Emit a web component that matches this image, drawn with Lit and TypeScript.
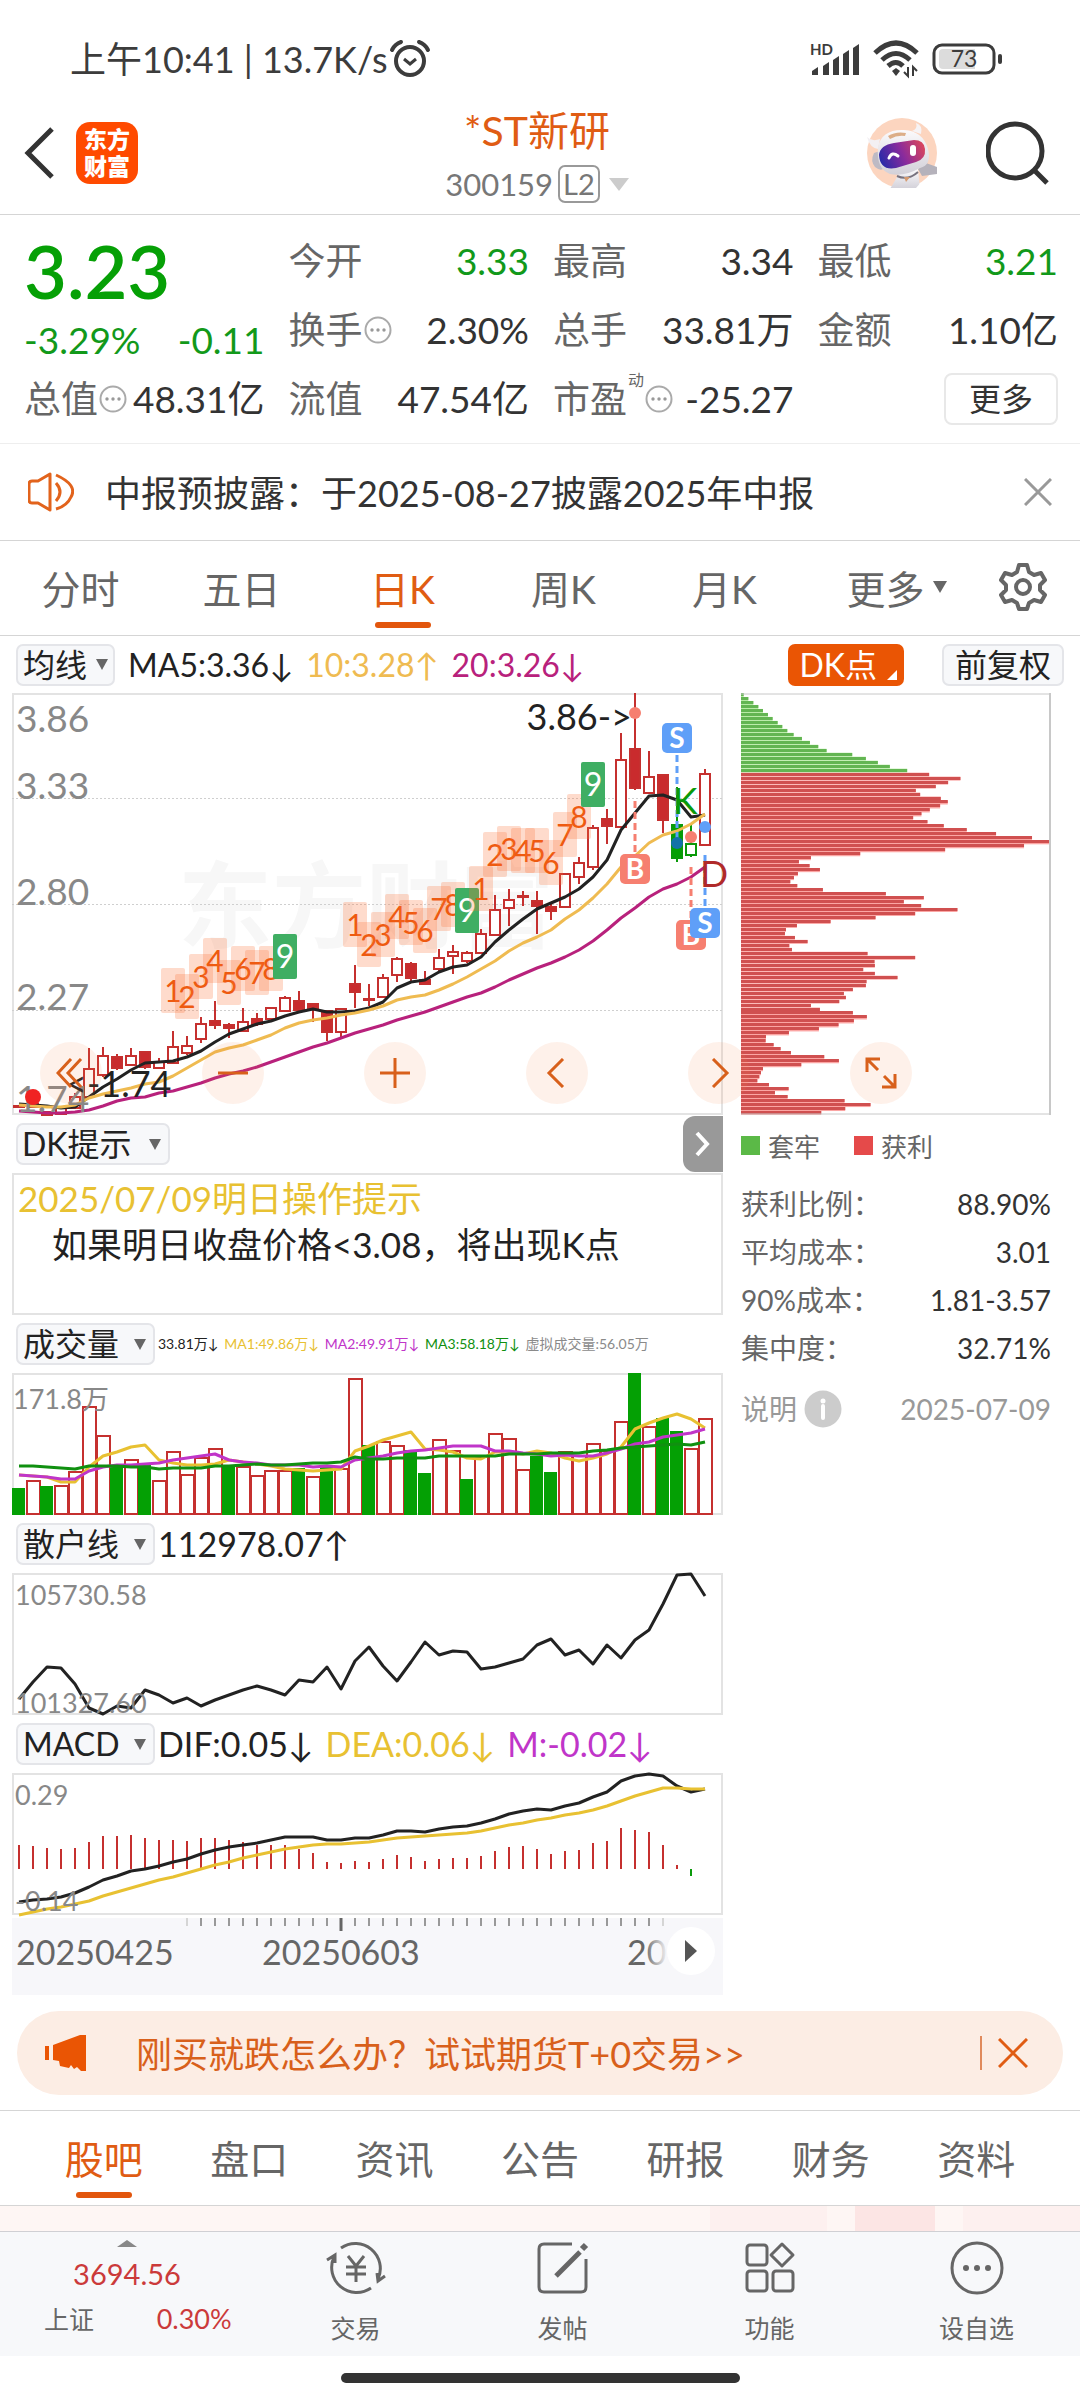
import { LitElement, html, svg, css } from "lit";
import { customElement } from "lit/decorators.js";
import { classMap } from "lit/directives/class-map.js";

type Candle = [number, number, number, number, string];

/* One slot per trading day, shared by all the stacked charts. */
const SLOT = 14;
const dayX = (i: number) => 7 + i * SLOT;
const line = (ys: number[]) => ys.map((y, i) => `${dayX(i)},${y}`).join(" ");

/* high, body top, body bottom, low, kind (h hollow, f filled, g green, k green hollow) */
const CANDLES: Candle[] = [
  [412, 413, 414, 415, "f"], [410, 411, 414, 415, "f"], [419, 419, 422, 422, "f"], [414, 415, 421, 421, "h"], [400, 404, 415, 415, "h"],
  [355, 376, 404, 404, "h"], [354, 363, 382, 384, "h"], [361, 364, 375, 377, "f"], [355, 363, 372, 373, "h"], [358, 359, 374, 376, "f"],
  [365, 369, 375, 375, "h"], [338, 354, 370, 371, "h"], [343, 353, 360, 362, "h"], [324, 331, 346, 350, "h"], [308, 328, 332, 336, "f"],
  [330, 332, 335, 345, "f"], [315, 329, 338, 339, "h"], [320, 326, 331, 333, "f"], [315, 315, 326, 326, "h"], [303, 305, 318, 319, "h"],
  [298, 308, 317, 318, "f"], [310, 311, 315, 329, "f"], [318, 318, 339, 348, "f"], [315, 316, 339, 344, "h"], [272, 291, 299, 315, "f"],
  [291, 306, 307, 313, "f"], [281, 285, 304, 305, "h"], [264, 266, 282, 289, "h"], [269, 271, 285, 290, "f"], [278, 287, 291, 291, "f"],
  [256, 265, 276, 280, "h"], [252, 259, 263, 281, "h"], [258, 260, 268, 270, "h"], [236, 241, 260, 261, "h"], [202, 217, 242, 243, "h"],
  [196, 207, 215, 233, "h"], [198, 203, 204, 213, "f"], [198, 208, 213, 241, "f"], [210, 214, 218, 227, "f"], [181, 181, 214, 214, "h"],
  [164, 170, 184, 191, "h"], [132, 135, 174, 177, "h"], [116, 126, 133, 151, "f"], [40, 67, 134, 135, "h"], [0, 56, 95, 97, "f"],
  [58, 84, 100, 101, "h"], [81, 82, 127, 140, "f"], [94, 132, 165, 169, "g"], [130, 151, 162, 164, "k"], [76, 81, 152, 153, "h"],
];
const MA5 = [411, 412, 413, 415, 414, 404, 394, 386, 377, 370, 369, 368, 364, 358, 349, 341, 336, 331, 328, 323, 319, 316, 319, 319, 318, 315, 309, 295, 289, 287, 279, 274, 272, 264, 249, 237, 226, 216, 210, 204, 196, 184, 167, 137, 120, 103, 102, 107, 124, 122];
const MA10 = [412, 413, 414, 414, 412, 405, 401, 398, 395, 391, 389, 383, 375, 367, 359, 355, 352, 347, 342, 335, 330, 327, 325, 322, 320, 317, 313, 307, 304, 302, 297, 291, 284, 276, 268, 258, 250, 244, 237, 226, 217, 205, 191, 174, 163, 150, 142, 138, 131, 121];
const MA20 = [418, 419, 420, 420, 419, 417, 413, 408, 405, 404, 400, 398, 394, 390, 385, 381, 378, 374, 369, 364, 359, 354, 350, 345, 340, 336, 332, 327, 323, 319, 314, 309, 304, 300, 294, 287, 281, 275, 270, 264, 257, 248, 237, 225, 215, 204, 196, 191, 184, 174];
/* Nine-count runs: first day, then the label top of each day. */
const RUNS: [number, number[]][] = [
  [11, [275, 281, 261, 245, 267, 253, 257, 253, 241]],
  [24, [209, 229, 219, 201, 207, 215, 193, 189, 195]],
  [33, [173, 139, 133, 135, 135, 147, 119, 101, 69]],
];
const VOLUME = [115, 107, 113, 112, 98, 33, 62, 93, 86, 92, 107, 78, 101, 84, 75, 93, 93, 102, 97, 97, 95, 103, 94, 95, 5, 72, 68, 72, 77, 100, 66, 77, 106, 83, 60, 65, 96, 83, 99, 78, 82, 70, 77, 48, 0, 53, 45, 58, 75, 45];
const VOLUME_DOWN = new Set([0, 2, 7, 9, 15, 20, 22, 25, 28, 29, 32, 37, 38, 44, 46, 47]);
const VMA1 = [102, 103, 104, 109, 109, 94, 83, 79, 74, 72, 87, 90, 92, 92, 91, 87, 89, 91, 93, 96, 97, 98, 97, 96, 78, 73, 67, 63, 59, 76, 77, 79, 85, 86, 79, 79, 81, 78, 80, 85, 88, 85, 81, 74, 56, 50, 45, 41, 46, 55];
const VMA2 = [102, 103, 104, 106, 106, 98, 94, 92, 92, 91, 90, 87, 85, 83, 81, 87, 89, 90, 92, 92, 92, 94, 93, 94, 87, 85, 83, 80, 78, 77, 75, 73, 73, 73, 78, 78, 80, 81, 83, 82, 83, 83, 80, 76, 71, 69, 64, 62, 60, 56];
const VMA3 = [93, 93, 94, 95, 96, 93, 93, 93, 94, 94, 96, 95, 95, 95, 93, 93, 92, 91, 92, 92, 91, 90, 90, 89, 84, 86, 86, 85, 85, 85, 83, 83, 83, 83, 83, 81, 81, 81, 80, 80, 80, 78, 77, 75, 74, 73, 72, 71, 72, 69];
const RETAIL = [126, 109, 94, 95, 111, 135, 141, 133, 135, 117, 122, 130, 125, 133, 127, 122, 117, 113, 117, 122, 107, 109, 94, 116, 88, 74, 93, 108, 89, 69, 82, 78, 79, 96, 94, 90, 86, 72, 66, 82, 77, 91, 72, 85, 67, 57, 31, 2, 1, 23];
const DIF = [129, 127, 126, 124, 120, 114, 107, 103, 98, 96, 93, 89, 86, 81, 77, 74, 72, 70, 67, 64, 64, 64, 67, 67, 65, 65, 62, 58, 58, 59, 56, 54, 53, 50, 46, 41, 38, 36, 37, 33, 30, 24, 19, 8, 3, 1, 3, 13, 19, 16];
const DEA = [142, 139, 136, 134, 131, 128, 123, 119, 115, 111, 107, 104, 100, 96, 92, 89, 85, 82, 79, 76, 74, 72, 71, 71, 70, 69, 67, 65, 64, 63, 62, 61, 60, 58, 55, 52, 50, 47, 45, 42, 40, 37, 33, 28, 23, 19, 15, 15, 16, 16];
const MACD = [72, 73, 75, 76, 75, 69, 63, 63, 62, 65, 67, 67, 68, 65, 65, 67, 69, 72, 72, 72, 76, 80, 89, 90, 88, 89, 86, 82, 84, 88, 86, 85, 85, 83, 78, 74, 73, 76, 81, 78, 77, 70, 68, 55, 57, 59, 72, 92, 103];
/* Cost distribution from the highest price down; the first rows are shares at a loss. */
const COST_AXIS = 62;
const COST_MAX = 993;
const LOSS_ROWS = 20;
const COST = [70, 84, 99, 114, 128, 143, 157, 172, 186, 201, 220, 245, 269, 294, 319, 396, 437, 473, 509, 561, 627, 721, 684, 647, 587, 600, 662, 683, 660, 629, 604, 579, 622, 671, 740, 828, 936, 993, 912, 675, 420, 272, 236, 268, 299, 233, 221, 210, 231, 308, 497, 611, 551, 603, 712, 585, 466, 331, 230, 197, 194, 224, 262, 207, 215, 442, 585, 463, 464, 429, 464, 532, 439, 437, 398, 371, 377, 357, 272, 299, 398, 440, 401, 355, 296, 206, 137, 136, 160, 181, 212, 312, 356, 243, 128, 122, 117, 111, 146, 205, 164, 202, 373, 451, 375, 303];

const base = css`
  * { box-sizing: border-box; }
  button, select { font: inherit; color: inherit; background: none; border: 0; padding: 0; margin: 0; }
  button { display: inline-flex; align-items: center; justify-content: center; }
  a { color: inherit; text-decoration: none; }
  svg { display: block; flex: none; }
`;

@customElement("quote-charts")
export class QuoteCharts extends LitElement {
  static styles = [base, css`
    :host { display: block; }
    .legend-row { display: flex; align-items: center; height: 57px; padding: 0 16px; font-size: 32px; line-height: 40px; }
    .ma { display: flex; gap: 13px; margin-left: 13px; margin-right: auto; white-space: nowrap; }
    .black { color: #222; }
    .amber { color: #efbb51; }
    .magenta { color: #b8217c; }
    .gold { color: #e8c132; }
    .violet { color: #c035c9; }
    .green { color: #109010; }
    .grey { color: #8a8a8a; }
    .pick { position: relative; display: inline-flex; align-items: center; flex: none; }
    .pick::after { content: ""; position: absolute; right: 9px; border: 6px solid transparent; border-top: 11px solid #666; border-bottom: 0; pointer-events: none; }
    .pick select, .chip { appearance: none; height: 42px; border: 2px solid #e4e5e9; border-radius: 7px; background: #f7f8fa; color: #222; font-size: 32px; line-height: 38px; padding: 0 33px 0 5px; }
    .pick.tight::after { right: 7px; }
    .pick.tight select { padding-right: 25px; }
    .pick.wide select { padding: 0 36px 0 4px; }
    .chip { padding: 0 11px; }
    .dk { position: relative; height: 42px; padding: 0 27px 0 11px; border-radius: 7px; background: #ea5504; color: #fff; margin-right: 38px; }
    .dk::after { content: ""; position: absolute; right: 7px; bottom: 6px; border-left: 10px solid transparent; border-bottom: 10px solid #fff; }
    .charts { position: relative; display: grid; grid-template-columns: 711fr 310fr; column-gap: 18px; padding: 0 29px 0 12px; align-items: start; }
    .plot { width: 100%; height: auto; overflow: visible; }
    .frame { fill: none; stroke: #e3e3e3; stroke-width: 2; }
    .grid { stroke: #cfcfcf; stroke-dasharray: 2 2; }
    .up { stroke: #c5302f; fill: #c92b2d; stroke-width: 2; }
    .hollow { fill: #fff; }
    .down { stroke: #0a9a0a; fill: #04a004; stroke-width: 2; }
    .down.hollow { fill: #fff; }
    .curve { fill: none; stroke-width: 3; stroke-linejoin: round; }
    .s-black { stroke: #222; }
    .s-amber { stroke: #efbb51; }
    .s-magenta { stroke: #b8217c; }
    .s-gold { stroke: #e8c132; }
    .s-violet { stroke: #c035c9; }
    .s-green { stroke: #109010; }
    .axis { fill: #888; font-size: 37px; }
    .axis.small { font-size: 27px; }
    .tag { fill: #222; font-size: 36px; }
    .watermark { fill: #f7f7f7; font-size: 94px; font-weight: 700; }
    .count { fill: #fa6f32; fill-opacity: 0.25; }
    .count-text { fill: #ee5a10; font-size: 30px; text-anchor: middle; }
    .nine { fill: #3fae63; }
    .nine-text { fill: #fff; font-size: 32px; text-anchor: middle; }
    .sell { fill: #5f9ff8; }
    .buy { fill: #f67f70; }
    .mark-text { fill: #fff; font-size: 28px; font-weight: 700; text-anchor: middle; }
    .sell-line { stroke: #5f9ff8; stroke-width: 3; stroke-dasharray: 7 4; }
    .buy-line { stroke: #f67f70; stroke-width: 3; stroke-dasharray: 7 4; }
    .letter { font-size: 37px; }
    .row { display: flex; align-items: center; height: 58px; padding-left: 4px; font-size: 34px; line-height: 40px; white-space: nowrap; }
    .row .values { display: flex; margin-left: 3px; gap: 12px; }
    .row .values.tiny { font-size: 14px; gap: 6px; line-height: 24px; }
    .next { margin-left: auto; width: 40px; height: 56px; background: #999; border-radius: 12px 0 0 12px; }
    .tip { height: 142px; border: 2px solid #e3e3e3; padding: 0 4px; font-size: 35px; line-height: 46px; color: #222; }
    .tip p { margin: 0; }
    .tip .advice { padding-left: 34px; }
    .dates { position: relative; margin-top: 3px; background: #f7f7fa; height: 77px; color: #666; }
    .dates .axis { fill: #666; font-size: 34px; }
    .play { position: absolute; right: 8px; top: 9px; width: 48px; height: 48px; border-radius: 50%; background: #fff; }
    .keys { display: flex; align-items: center; height: 60px; color: #666; font-size: 26px; gap: 8px; }
    .keys i { width: 19px; height: 19px; background: #5bb947; }
    .keys i.gain { background: #e54a4a; margin-left: 26px; }
    .stats { width: 100%; border-collapse: collapse; font-size: 28px; line-height: 48px; color: #333; margin-top: 5px; }
    .stats th { font-weight: 400; text-align: left; color: #666; padding: 0; }
    .stats td { text-align: right; padding: 0; }
    .explain { display: flex; justify-content: space-between; align-items: center; color: #999; font-size: 28px; line-height: 40px; margin-top: 17px; }
    .explain button { gap: 7px; }
    .tools { position: absolute; top: 349px; left: 40px; right: 168px; display: flex; justify-content: space-between; }
    .tools button { width: 62px; height: 62px; border-radius: 50%; background: rgba(250, 125, 60, 0.11); }
    .tools svg { fill: none; stroke: #d8601b; stroke-width: 3; }
  `];

  private candle([hi, top, bot, lo, kind]: Candle, i: number) {
    const x = dayX(i);
    const tone = kind === "g" || kind === "k" ? "down" : "up";
    const open = kind === "h" || kind === "k";
    return svg`<g class=${tone}><path d="M${x} ${hi}V${lo}"/><rect class=${classMap({ [tone]: true, hollow: open })} x=${x - 5} y=${top} width="10" height=${Math.max(1, bot - top)} /></g>`;
  }

  private count(start: number, tops: number[]) {
    return tops.map((top, n) => {
      const x = dayX(start + n);
      const last = n === 8;
      return svg`<rect class=${last ? "nine" : "count"} x=${x - 12} y=${top} width="24" height="45" rx="2"/><text class=${last ? "nine-text" : "count-text"} x=${x} y=${top + 34}>${n + 1}</text>`;
    });
  }

  private mark(kind: string, day: number, top: number) {
    const x = dayX(day);
    return svg`<rect class=${kind} x=${x - 15} y=${top} width="30" height="30" rx="5"/><text class="mark-text" x=${x} y=${top + 25}>${kind === "buy" ? "B" : "S"}</text>`;
  }

  private priceChart() {
    return html`<svg class="plot" viewBox="0 0 711 422" role="img" aria-label="日K线">
      <rect class="frame" x="1" y="1" width="709" height="420"/>
      <text class="watermark" x="166" y="248">东方财富</text>
      <path class="grid" d="M0 105.500H711M0 211.500H711M0 317.500H711"/>
      ${CANDLES.map((c, i) => this.candle(c, i))}
      <polyline class="curve s-black" points=${line(MA5)} />
      <polyline class="curve s-amber" points=${line(MA10)} />
      <polyline class="curve s-magenta" points=${line(MA20)} />
      ${RUNS.map(([s, t]) => this.count(s, t))}
      <text class="axis" x="4" y="39">3.86</text>
      <text class="axis" x="4" y="106">3.33</text>
      <text class="axis" x="4" y="212">2.80</text>
      <text class="axis" x="4" y="317">2.27</text>
      <text class="axis" x="4" y="419">1.74</text>
      <circle cx="21" cy="404" r="8" fill="#f02323"/>
      <text class="tag" x="54" y="404">&lt;-1.74</text>
      <text class="tag" x="620" y="37" text-anchor="end">3.86-&gt;</text>
      <path class="buy-line" d="M623 108V160M679 174V227"/>
      <path class="sell-line" d="M665 62V150M693 162V215"/>
      <g class="buy"><circle cx="623" cy="20" r="6"/><circle cx="679" cy="144" r="6"/></g>
      <circle cx="665" cy="150" r="6" fill="#1272a8"/><circle cx="693" cy="134" r="6" fill="#5f9ff8"/>
      ${this.mark("buy", 44, 161)}${this.mark("buy", 48, 227)}${this.mark("sell", 47, 30)}${this.mark("sell", 49, 215)}
      <text class="letter" x="661" y="121" fill="#0a9a0a">K</text>
      <text class="letter" x="688" y="194" fill="#b02a2a">D</text>
    </svg>`;
  }

  private volumeChart() {
    return html`<svg class="plot" viewBox="0 0 711 142" role="img" aria-label="成交量">
      <rect class="frame" x="1" y="1" width="709" height="140"/>
      ${VOLUME.map((y, i) => VOLUME_DOWN.has(i)
        ? svg`<rect fill="#04a004" x=${dayX(i) - 7} y=${y} width="13" height=${142 - y} />`
        : svg`<rect class="up hollow" x=${dayX(i) - 6} y=${y + 1} width="13" height=${140 - y} />`)}
      <polyline class="curve s-gold" points=${line(VMA1)} />
      <polyline class="curve s-violet" points=${line(VMA2)} />
      <polyline class="curve s-green" points=${line(VMA3)} />
      <text class="axis small" x="1" y="36">171.8万</text>
    </svg>`;
  }

  private retailChart() {
    return html`<svg class="plot" viewBox="0 0 711 142" role="img" aria-label="散户线">
      <rect class="frame" x="1" y="1" width="709" height="140"/>
      <polyline class="curve s-black" points=${line(RETAIL)} />
      <text class="axis small" x="3" y="32">105730.58</text>
      <text class="axis small" x="3" y="140">101327.60</text>
    </svg>`;
  }

  private macdChart() {
    return html`<svg class="plot" viewBox="0 0 711 142" role="img" aria-label="MACD">
      <rect class="frame" x="1" y="1" width="709" height="140"/>
      ${MACD.map((y, i) => svg`<path class=${y > 96 ? "down" : "up"} d="M${dayX(i)} 96V${y}"/>`)}
      <polyline class="curve s-black" points=${line(DIF)} />
      <polyline class="curve s-gold" points=${line(DEA)} />
      <text class="axis small" x="3" y="32">0.29</text>
      <text class="axis small" x="3" y="138">-0.14</text>
    </svg>`;
  }

  private costChart() {
    return html`<svg class="plot" viewBox="0 0 310 422" role="img" aria-label="筹码分布">
      ${COST.map((v, i) => {
        const w = ((v - COST_AXIS) / (COST_MAX - COST_AXIS)) * 310;
        const y = (i * 422) / COST.length;
        const loss = i < LOSS_ROWS;
        return svg`<rect x="0" y=${y} width=${w} height="4" fill=${loss ? "#b5eaa2" : "#fba5a3"} /><rect x="0" y=${Math.round(y)} width=${w} height="3" fill=${loss ? "#63b552" : "#d05050"} />`;
      })}
      <path d="M0 1H310M0 421H310" stroke="#c8c8c8"/><path d="M309 0V422" stroke="#c8c8c8" stroke-width="2"/>
    </svg>`;
  }

  private pick(name: string, size = "") {
    return html`<span class="pick ${size}"><select aria-label=${name}><option>${name}</option></select></span>`;
  }

  render() {
    return html`
      <div class="legend-row">
        ${this.pick("均线", "tight")}
        <div class="ma"><span class="black">MA5:3.36↓</span><span class="amber">10:3.28↑</span><span class="magenta">20:3.26↓</span></div>
        <button class="dk">DK点</button>
        <button class="chip">前复权</button>
      </div>
      <div class="charts">
        <div>
          ${this.priceChart()}
          <div class="row">${this.pick("DK提示", "wide")}
            <button class="next" aria-label="下一个"><svg width="16" height="28" viewBox="0 0 16 28" fill="none" stroke="#fff" stroke-width="4"><path d="M2 3L12 14L2 25"/></svg></button>
          </div>
          <div class="tip"><p class="gold">2025/07/09明日操作提示</p><p class="advice">如果明日收盘价格&lt;3.08，将出现K点</p></div>
          <div class="row">${this.pick("成交量")}
            <div class="values tiny"><span class="black">33.81万↓</span><span class="gold">MA1:49.86万↓</span><span class="violet">MA2:49.91万↓</span><span class="green">MA3:58.18万↓</span><span class="grey">虚拟成交量:56.05万</span></div>
          </div>
          ${this.volumeChart()}
          <div class="row">${this.pick("散户线")}<div class="values"><span class="black">112978.07↑</span></div></div>
          ${this.retailChart()}
          <div class="row">${this.pick("MACD")}
            <div class="values"><span class="black">DIF:0.05↓</span><span class="gold">DEA:0.06↓</span><span class="violet">M:-0.02↓</span></div>
          </div>
          ${this.macdChart()}
          <div class="dates">
            <svg class="plot" viewBox="0 0 711 77">
              <defs><linearGradient id="fade"><stop offset="0" stop-color="#f7f7fa" stop-opacity="0"/><stop offset="1" stop-color="#f7f7fa"/></linearGradient></defs>
              ${Array.from({ length: 35 }, (_, n) => n + 12).map((i) => svg`<path d="M${dayX(i)} 0V${i === 23 ? 13 : 8}" stroke=${i === 12 || i === 46 ? "#d5d5d5" : i === 23 ? "#666" : "#999"} stroke-width=${i === 23 ? 3 : 2} />`)}
              <text class="axis" x="4" y="47">20250425</text>
              <text class="axis" x="250" y="47">20250603</text>
              <text class="axis" x="615" y="47">20</text>
              <rect x="632" y="14" width="24" height="42" fill="url(#fade)"/>
            </svg>
            <button class="play" aria-label="播放"><svg width="14" height="22" viewBox="0 0 14 22"><path d="M1 0L13 11L1 22Z" fill="#555"/></svg></button>
          </div>
        </div>
        <div>
          ${this.costChart()}
          <div class="keys"><i></i>套牢<i class="gain"></i>获利</div>
          <table class="stats">
            <tr><th>获利比例：</th><td>88.90%</td></tr>
            <tr><th>平均成本：</th><td>3.01</td></tr>
            <tr><th>90%成本：</th><td>1.81-3.57</td></tr>
            <tr><th>集中度：</th><td>32.71%</td></tr>
          </table>
          <div class="explain">
            <button>说明<svg width="38" height="38" viewBox="0 0 38 38"><circle cx="19" cy="19" r="18.500" fill="#ccc"/><circle cx="19" cy="11" r="2.500" fill="#fff"/><path d="M19 16V28" stroke="#fff" stroke-width="4" stroke-linecap="round"/></svg></button>
            <time>2025-07-09</time>
          </div>
        </div>
        <div class="tools">
          <button aria-label="最左"><svg width="30" height="30" viewBox="0 0 30 30"><path d="M15 1L2 15L15 29M25 1L12 15L25 29"/></svg></button>
          <button aria-label="缩小"><svg width="30" height="30" viewBox="0 0 30 30"><path d="M0 15H30"/></svg></button>
          <button aria-label="放大"><svg width="30" height="30" viewBox="0 0 30 30"><path d="M0 15H30M15 0V30"/></svg></button>
          <button aria-label="左移"><svg width="30" height="30" viewBox="0 0 30 30"><path d="M21 1L7 15L21 29"/></svg></button>
          <button aria-label="右移"><svg width="30" height="30" viewBox="0 0 30 30"><path d="M9 1L23 15L9 29"/></svg></button>
          <button aria-label="全屏"><svg width="32" height="32" viewBox="0 0 32 32"><path d="M2 15V2H15M2 2L13 13M30 17V30H17M30 30L19 19"/></svg></button>
        </div>
      </div>`;
  }
}

@customElement("app-root")
export class AppRoot extends LitElement {
  static styles = [base, css`
    :host { display: block; background: #fff; color: #333; font-family: "Lato", "Noto Sans CJK SC", sans-serif; font-size: 36px; }
    .status { display: flex; align-items: center; justify-content: space-between; padding: 36px 76px 0 70px; line-height: 46px; font-size: 36px; color: #3c3c3c; }
    .status div { display: flex; align-items: center; gap: 3px; }
    .status .right { gap: 12px; }
    .status svg { overflow: visible; }
    .battery { font-size: 23px; }
    .head { display: grid; grid-template-columns: 1fr auto 1fr; align-items: center; padding: 25px 30px 10px 24px; border-bottom: 1px solid #d5d5d5; }
    .side { display: flex; align-items: center; gap: 22px; padding-bottom: 6px; }
    .side.end { justify-content: flex-end; gap: 48px; }
    .logo { width: 62px; height: 62px; border-radius: 14px; background: #ff4a00; color: #fff; font-size: 23px; line-height: 27px; font-weight: 900; text-align: center; padding-top: 4px; }
    .title { text-align: center; }
    .title h1 { margin: 0; font-weight: 400; font-size: 41px; line-height: 48px; color: #e05c13; }
    .code { height: 40px; margin-top: 9px; font-size: 31px; color: #777; gap: 5px; }
    .level { border: 2px solid #999; border-radius: 7px; line-height: 34px; padding: 0 3px; font-size: 29px; }
    .caret { border: 10px solid transparent; border-top: 13px solid #ccc; border-bottom: 0; margin-left: 4px; }
    .quote { display: grid; grid-template-columns: repeat(4, 1fr); column-gap: 24px; grid-auto-rows: 69px; padding: 11px 22px 10px 24px; border-bottom: 1px solid #eee; font-size: 37px; line-height: 46px; white-space: nowrap; }
    .cell { display: flex; align-items: center; justify-content: space-between; }
    .cell .name { display: flex; align-items: center; color: #666; gap: 1px; }
    .sup { font-size: 16px; line-height: 16px; align-self: flex-start; margin-top: -4px; }
    .down { color: #12991a; }
    .price { grid-row: span 2; padding-top: 7px; }
    .price strong { display: block; font-size: 74px; line-height: 76px; font-weight: 600; color: #06a006; }
    .price div { display: flex; justify-content: space-between; margin-top: 8px; }
    .more { height: 52px; width: 114px; border: 2px solid #e8e8e8; border-radius: 8px; font-size: 32px; margin-left: auto; }
    .notice { display: flex; align-items: center; height: 97px; padding: 0 28px; border-bottom: 1px solid #d5d5d5; font-size: 36px; }
    .notice a { margin-left: 31px; margin-right: auto; padding-bottom: 2px; white-space: nowrap; }
    .tabs { display: grid; grid-template-columns: repeat(6, 161fr) 114fr; height: 95px; border-bottom: 1px solid #d5d5d5; color: #666; font-size: 39px; }
    .tabs button { position: relative; padding-bottom: 3px; }
    .tabs .menu { padding-left: 22px; }
    .tabs .on { color: #e05c13; }
    .tabs .on::after { content: ""; position: absolute; left: calc(50% - 28px); bottom: 7px; width: 56px; height: 6px; border-radius: 3px; background: #e2560d; }
    .tabs .tri { border: 7px solid transparent; border-top: 12px solid #666; border-bottom: 0; margin-left: 8px; }
    .promo { display: flex; align-items: center; margin: 16px 17px 15px; height: 84px; border-radius: 42px; background: #fcede4; color: #d8601b; padding: 0 35px 0 27px; font-size: 36px; }
    .promo a { margin-left: 48px; margin-right: auto; padding-bottom: 3px; }
    .promo button { border-left: 2px solid #e08a5c; padding-left: 16px; height: 34px; }
    .sections { grid-template-columns: repeat(7, 1fr); border-top: 1px solid #d5d5d5; height: 96px; padding: 0 31px; }
    .peek { display: flex; height: 26px; background: #fef6f4; border-bottom: 1px solid #d0d0d4; padding-left: 710px; }
    .peek i { flex: 120; background: #fdf0ef; }
    .peek i.deep { flex: 83; background: #fce5e4; margin: 0 28px; }
    .dock { display: grid; grid-template-columns: 252fr 207fr 207fr 207fr 207fr; height: 124px; background: #f7f8fa; color: #666; font-size: 25px; }
    .dock button { flex-direction: column; justify-content: flex-start; padding-top: 9px; gap: 15px; line-height: 36px; }
    .dock svg { fill: none; stroke: #666; stroke-width: 3; }
    .index { display: grid; grid-template-columns: auto auto; justify-content: space-between; padding: 8px 16px 0 44px; line-height: 36px; align-content: start; row-gap: 9px; }
    .index .arrow { grid-column: span 2; justify-self: center; border: 10px solid transparent; border-bottom: 7px solid #888; border-top: 0; margin-right: 26px; }
    .index b { grid-column: span 2; text-align: center; font-weight: 400; font-size: 29px; color: #cb3a3a; margin-right: 26px; }
    .index em { font-style: normal; font-size: 27px; color: #cb3a3a; }
    .home { width: 399px; height: 10px; border-radius: 5px; background: #333; margin: 17px auto; }
  `];

  private info() {
    return html`<svg width="28" height="28" viewBox="0 0 28 28"><circle cx="14" cy="14" r="12.500" fill="none" stroke="#aaa" stroke-width="2"/><g fill="#999"><circle cx="8" cy="14" r="1.700"/><circle cx="14" cy="14" r="1.700"/><circle cx="20" cy="14" r="1.700"/></g></svg>`;
  }

  private cell(name: string, value: string, opts: { tone?: string; info?: boolean; sup?: string } = {}) {
    return html`<div class="cell"><span class="name">${name}${opts.sup ? html`<span class="sup">${opts.sup}</span>` : ""}${opts.info ? this.info() : ""}</span><span class=${opts.tone ?? ""}>${value}</span></div>`;
  }

  private robot() {
    return html`<svg width="72" height="72" viewBox="0 0 72 72">
      <defs>
        <linearGradient id="visor" x1="0" y1="0.600" x2="1" y2="0.300"><stop offset="0" stop-color="#2b2aa8"/><stop offset="0.500" stop-color="#8a2b9c"/><stop offset="1" stop-color="#d8455e"/></linearGradient>
        <linearGradient id="shell" x1="0" y1="0" x2="0" y2="1"><stop offset="0" stop-color="#fbfafc"/><stop offset="1" stop-color="#d2d0d8"/></linearGradient>
        <clipPath id="disc"><path d="M0 0H72V58L58 62L50 71H24L0 50Z"/></clipPath>
      </defs>
      <circle cx="36" cy="36" r="35" fill="#fcd5bf"/>
      <g clip-path="url(#disc)">
        <path d="M34 55L52 52L54 72H24Z" fill="url(#shell)"/>
        <path d="M52 52L60 46L71 50V57L56 59Z" fill="#b5b2bb"/>
        <path d="M31 59Q42 64 52 55" fill="none" stroke="#77727e" stroke-width="2"/>
        <path d="M38 60L40 65L44 60Z" fill="#d59a70"/>
      </g>
      <path d="M1 20Q6 25 14 22L12 32Q4 31 1 20Z" fill="#f3f0f3"/>
      <path d="M50 6Q57 8 55 17L46 14Q52 12 50 6Z" fill="#f6f3f5"/>
      <path d="M8 36Q4 44 9 50Q14 54 17 52L14 34Z" fill="#bdbac4"/>
      <path d="M12 30Q16 12 38 13Q57 14 62 32Q66 48 54 51Q38 60 24 57Q10 52 12 30Z" fill="url(#shell)"/>
      <path d="M22 19Q30 14 40 16L39 19Q31 18 24 22Z" fill="#dcae88"/>
      <path d="M13 38Q14 28 28 26L48 23Q58 23 59 32Q60 42 50 45L30 51Q14 54 13 38Z" fill="url(#visor)"/>
      <path d="M23 41Q26 34 32 39" fill="none" stroke="#fff" stroke-width="3" stroke-linecap="round"/>
      <rect x="44" y="28" width="6" height="11" rx="3" fill="#fff"/>
    </svg>`;
  }

  render() {
    const periods = ["分时", "五日", "日K", "周K", "月K"];
    const sections = ["股吧", "盘口", "资讯", "公告", "研报", "财务", "资料"];
    return html`
      <div class="status">
        <div>上午10:41 | 13.7K/s
          <svg width="40" height="38" viewBox="0 0 40 38" fill="none" stroke="#3c3c3c" stroke-width="4"><circle cx="20" cy="21" r="14"/><path d="M2 10Q5 4 11 2M38 10Q35 4 29 2" stroke-linecap="round"/><path d="M14 19L20 24L26 19" stroke-width="3"/></svg>
        </div>
        <div class="right">
          <svg width="50" height="34" viewBox="0 0 50 34"><text x="0" y="13" font-size="15" font-weight="700" fill="#3c3c3c">HD</text><path d="M2 33V29L8 25V33ZM13 33V24L19 20V33ZM23 33V18L29 14V33ZM33 33V12L39 8V33ZM43 33V6L49 2V33Z" fill="#3c3c3c"/></svg>
          <svg width="48" height="38" viewBox="0 0 48 38" fill="none" stroke="#3c3c3c" stroke-width="5"><path d="M3 13Q24 -7 45 13M10 20Q24 7 38 20M16 26Q24 19 31 26"/><path d="M24 28L28 31L24 36L20 31Z" fill="#3c3c3c" stroke="none"/><path d="M36 27V36L32 32M41 36V27L45 31" stroke-width="2"/></svg>
          <svg class="battery" width="72" height="32" viewBox="0 0 72 32"><rect x="2" y="2" width="60" height="28" rx="8" fill="none" stroke="#3c3c3c" stroke-width="3"/><path d="M11 6H43V26H11Q7 26 7 22V10Q7 6 11 6Z" fill="#dcdcdc"/><text x="32" y="24" text-anchor="middle" fill="#3c3c3c">73</text><rect x="66" y="11" width="4" height="10" rx="2" fill="#3c3c3c"/></svg>
        </div>
      </div>
      <header class="head">
        <div class="side">
          <button aria-label="返回"><svg width="30" height="52" viewBox="0 0 30 52" fill="none" stroke="#333" stroke-width="5"><path d="M28 2L4 26L28 50"/></svg></button>
          <div class="logo">东方<br>财富</div>
        </div>
        <div class="title"><h1>*ST新研</h1><button class="code">300159<span class="level">L2</span><span class="caret"></span></button></div>
        <div class="side end">
          <button aria-label="智能助手">${this.robot()}</button>
          <button aria-label="搜索"><svg width="64" height="64" viewBox="0 0 64 64" fill="none" stroke="#333" stroke-width="5"><circle cx="29" cy="30" r="27"/><path d="M48 49L61 62"/></svg></button>
        </div>
      </header>
      <section class="quote">
        <div class="price"><strong>3.23</strong><div class="down"><span>-3.29%</span><span>-0.11</span></div></div>
        ${this.cell("今开", "3.33", { tone: "down" })}${this.cell("最高", "3.34")}${this.cell("最低", "3.21", { tone: "down" })}
        ${this.cell("换手", "2.30%", { info: true })}${this.cell("总手", "33.81万")}${this.cell("金额", "1.10亿")}
        ${this.cell("总值", "48.31亿", { info: true })}${this.cell("流值", "47.54亿")}${this.cell("市盈", "-25.27", { info: true, sup: "动" })}
        <div class="cell"><button class="more">更多</button></div>
      </section>
      <div class="notice">
        <svg width="46" height="40" viewBox="0 0 46 40" fill="none" stroke="#e2631c" stroke-width="3"><path d="M22 2V38L10 31H4Q1 31 1 28V12Q1 9 4 9H10Z" stroke-linejoin="round"/><path d="M28 11Q36 20 28 29M28 3Q50 13 43 25Q39 34 28 37"/></svg>
        <a href="#notice">中报预披露：于2025-08-27披露2025年中报</a>
        <button aria-label="关闭"><svg width="28" height="28" viewBox="0 0 28 28" stroke="#999" stroke-width="3"><path d="M1 1L27 27M27 1L1 27"/></svg></button>
      </div>
      <nav class="tabs">
        ${periods.map((p) => html`<button class=${classMap({ on: p === "日K" })}>${p}</button>`)}
        <button class="menu">更多<span class="tri"></span></button>
        <button class="gear" aria-label="设置"><svg width="48" height="50" viewBox="0 0 48 50" fill="none" stroke="#666" stroke-width="4" stroke-linejoin="round"><path d="M20 3H28L30 10L35 13L42 11L46 18L41 23V28L46 33L42 40L35 38L30 41L28 47H20L18 41L13 38L6 40L2 33L7 28V23L2 18L6 11L13 13L18 10Z"/><circle cx="24" cy="25" r="7"/></svg></button>
      </nav>
      <quote-charts></quote-charts>
      <div class="promo">
        <svg width="44" height="38" viewBox="0 0 44 38" fill="#ea5504"><rect x="1" y="12" width="4" height="14"/><path d="M9 11L36 1H42V37H37L33 33L30 35L27 31L25 34L16 32L15 27L9 26Z"/></svg>
        <a href="#promo">刚买就跌怎么办？试试期货T+0交易&gt;&gt;</a>
        <button aria-label="关闭广告"><svg width="30" height="30" viewBox="0 0 30 30" stroke="#e05c13" stroke-width="3"><path d="M1 1L29 29M29 1L1 29"/></svg></button>
      </div>
      <nav class="tabs sections">${sections.map((s, i) => html`<button class=${classMap({ on: i === 0 })}>${s}</button>`)}</nav>
      <div class="peek"><i></i><i class="deep"></i><i></i></div>
      <footer class="dock">
        <div class="index"><span class="arrow"></span><b>3694.56</b><span>上证</span><em>0.30%</em></div>
        <button><svg width="60" height="54" viewBox="0 0 60 54"><path d="M15 7A25 25 0 0 1 52 38M45 47A25 25 0 0 1 8 16M1 19L9 14V22M59 35L52 40L51 32"/><path d="M22 15L30 25L38 15M30 25V41M20 26H40M20 33H40"/></svg>交易</button>
        <button><svg width="54" height="54" viewBox="0 0 54 54"><path d="M36 3H8Q3 3 3 8V46Q3 51 8 51H45Q50 51 50 46V18"/><path d="M20 35L44 11" stroke-width="5"/><path d="M46 8L50 4" stroke-width="6"/></svg>发帖</button>
        <button><svg width="54" height="54" viewBox="0 0 54 54"><rect x="4" y="4" width="20" height="20" rx="3"/><rect x="4" y="30" width="20" height="20" rx="3"/><rect x="30" y="30" width="20" height="20" rx="3"/><path d="M39 3L50 14L39 25L28 14Z" stroke-linejoin="round"/></svg>功能</button>
        <button><svg width="54" height="54" viewBox="0 0 54 54"><circle cx="27" cy="27" r="25"/><g fill="#666" stroke="none"><circle cx="16" cy="27" r="3"/><circle cx="27" cy="27" r="3"/><circle cx="38" cy="27" r="3"/></g></svg>设自选</button>
      </footer>
      <div class="home"></div>`;
  }
}
